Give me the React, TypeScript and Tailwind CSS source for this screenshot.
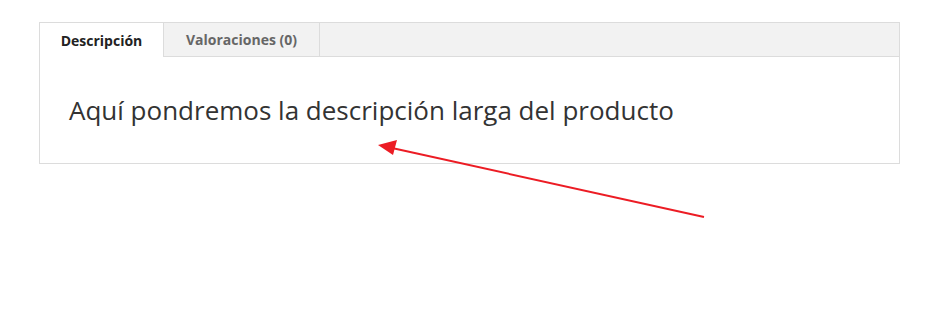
const App = () => {
  return (
    <div
      className="relative w-[931px] h-[333px] bg-white"
      style={{ fontFamily: '"Open Sans", "Liberation Sans", sans-serif' }}
    >
      <div className="pt-[22px] pl-[39px]">
        <div className="w-[861px] border border-[#dcdcdc]">
          <div className="flex h-[34px] bg-[#f2f2f2] border-b border-[#dcdcdc]">
            <div className="w-[124px] h-[34px] bg-white border-r border-[#dcdcdc] flex items-center justify-center text-[14px] font-bold text-[#222]">
              Descripción
            </div>
            <div className="w-[156px] border-r border-[#dcdcdc] flex items-center justify-center text-[14px] font-bold text-[#666]">
              Valoraciones (0)
            </div>
          </div>
          <div className="pl-[29px] pt-[35px] pb-[35px] text-[26px] leading-[36px] text-[#333]">
            Aquí pondremos la descripción larga del producto
          </div>
        </div>
      </div>
      <svg
        className="absolute left-0 top-0"
        width="931"
        height="333"
        viewBox="0 0 931 333"
      >
        <line x1="704" y1="217" x2="392" y2="148" stroke="#ec1c24" strokeWidth="2" />
        <polygon points="378,145 397,140 393,155" fill="#ec1c24" />
      </svg>
    </div>
  );
};

export default App;
